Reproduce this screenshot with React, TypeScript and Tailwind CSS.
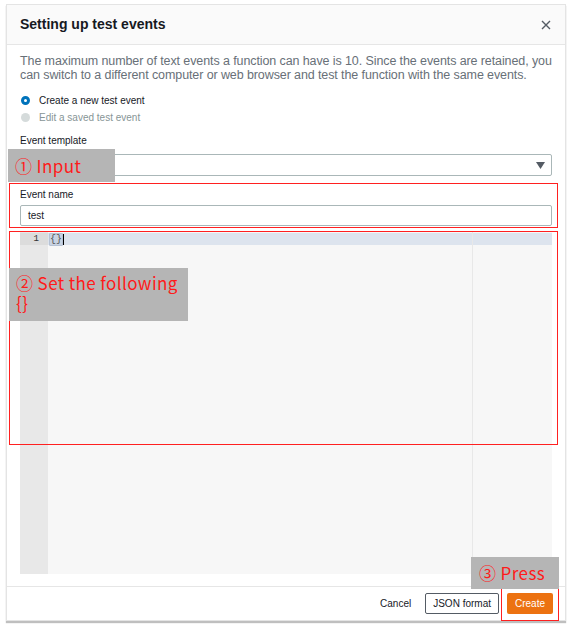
import React from "react";

export default function App() {
  const font = { fontFamily: '"Liberation Sans", "Noto Sans", Arial, sans-serif' };
  const anno = { fontFamily: '"Noto Sans CJK JP", "Noto Sans", sans-serif' };
  return (
    <div className="relative w-[574px] h-[626px] bg-white" style={font}>
      <div className="absolute left-[6px] top-[4px] w-[560px] h-[617px] border border-[#e4e4e4] shadow-[0_2px_1px_rgba(0,0,0,0.25)] bg-white flex flex-col">
        <div className="h-[40px] bg-[#fafafa] border-b border-[#e6e6e6] flex items-center justify-between pl-[13px] pr-[12px] shrink-0">
          <span className="text-[14px] font-bold text-[#16191f]">Setting up test events</span>
          <svg width="10" height="10" viewBox="0 0 10 10" className="mr-[2px]">
            <path d="M1 1 L9 9 M9 1 L1 9" stroke="#545b64" strokeWidth="1.4" />
          </svg>
        </div>
        <div className="flex flex-col px-[13px] pt-[9px] shrink-0">
          <p className="text-[12.5px] leading-[14px] text-[#687078] tracking-[-0.1px]">
            The maximum number of text events a function can have is 10. Since the events are retained, you can switch to a different computer or web browser and test the function with the same events.
          </p>
          <div className="mt-[11px] flex items-center gap-[9px] h-[14px]">
            <span className="w-[9px] h-[9px] rounded-full border-[3px] border-[#0073bb] bg-white ml-[1px]" />
            <span className="text-[10px] text-[#16191f]">Create a new test event</span>
          </div>
          <div className="mt-[3px] flex items-center gap-[9px] h-[14px]">
            <span className="w-[9px] h-[9px] rounded-full bg-[#d5dbdb] ml-[1px]" />
            <span className="text-[10px] text-[#879596]">Edit a saved test event</span>
          </div>
          <div className="mt-[11px] text-[10px] text-[#16191f] leading-[12px] h-[12px]">Event template</div>
          <div className="mt-[7px] h-[22px] border border-[#aab7b8] rounded-[2px] flex items-center justify-end pr-[6px]">
            <svg width="9" height="7" viewBox="0 0 9 7"><path d="M0 0 H9 L4.5 7 Z" fill="#545b64" /></svg>
          </div>
          <div className="mt-[13px] text-[10px] text-[#16191f] leading-[12px] h-[12px]">Event name</div>
          <div className="mt-[4px] h-[21px] border border-[#aab7b8] rounded-[2px] flex items-center pl-[7px] text-[10px] text-[#16191f]">test</div>
          <div className="mt-[6px] h-[342px] flex bg-[#f7f7f7] relative">
            <div className="w-[28px] bg-[#e8e8e8] shrink-0">
              <div className="h-[12px] mt-[1px] bg-[#dcdcdc] text-[9px] text-[#333] text-right pr-[9px] leading-[12px]" style={{ fontFamily: '"Liberation Mono", monospace' }}>1</div>
            </div>
            <div className="flex-1 relative">
              <div className="h-[12px] mt-[1px] bg-[#dde4ee] flex items-center pl-[1px]">
                <span className="text-[10px] leading-[11px] text-[#555] bg-[#c8d3e3] border border-[#b6c2d4] rounded-[1px]" style={{ fontFamily: '"Liberation Mono", monospace' }}>{"{}"}</span>
                <span className="w-[1px] h-[11px] bg-black" />
              </div>
              <div className="absolute top-0 bottom-0 left-[424px] w-px bg-[#e8e8e8]" />
            </div>
          </div>
        </div>
        <div className="h-[33px] border-t border-[#e6e6e6] flex items-center justify-end gap-[8px] pr-[12px] shrink-0 mt-[12px]">
          <span className="text-[10px] text-[#16191f] mr-[6px]">Cancel</span>
          <div className="h-[21px] px-[7px] border border-[#545b64] rounded-[2px] flex items-center text-[10px] text-[#16191f]">JSON format</div>
          <div className="h-[21px] px-[8px] bg-[#ec7211] rounded-[2px] flex items-center text-[10px] text-white">Create</div>
        </div>
      </div>

      {/* annotations */}
      <div className="absolute left-[9px] top-[183px] w-[549px] h-[45px] border border-[#ff2020]" />
      <div className="absolute left-[9px] top-[231px] w-[549px] h-[214px] border border-[#ff2020]" />
      <div className="absolute left-[501px] top-[588px] w-[58px] h-[33px] border border-[#ff2020]" />

      <div className="absolute left-[8px] top-[149px] w-[107px] h-[33px] bg-[#b5b5b5] flex items-center pl-[7px] text-[17px] tracking-[0.4px] text-[#ff1a1a]" style={anno}>
        ①&nbsp;Input
      </div>
      <div className="absolute left-[9px] top-[268px] w-[179px] h-[53px] bg-[#b5b5b5] pl-[7px] pt-[5px] text-[17px] leading-[20px] tracking-[0.4px] text-[#ff1a1a]" style={anno}>
        <div>② Set the following</div>
        <div>{"{}"}</div>
      </div>
      <div className="absolute left-[471px] top-[557px] w-[88px] h-[32px] bg-[#b5b5b5] flex items-center pl-[8px] text-[17px] tracking-[0.4px] text-[#ff1a1a]" style={anno}>
        ③ Press
      </div>
    </div>
  );
}
